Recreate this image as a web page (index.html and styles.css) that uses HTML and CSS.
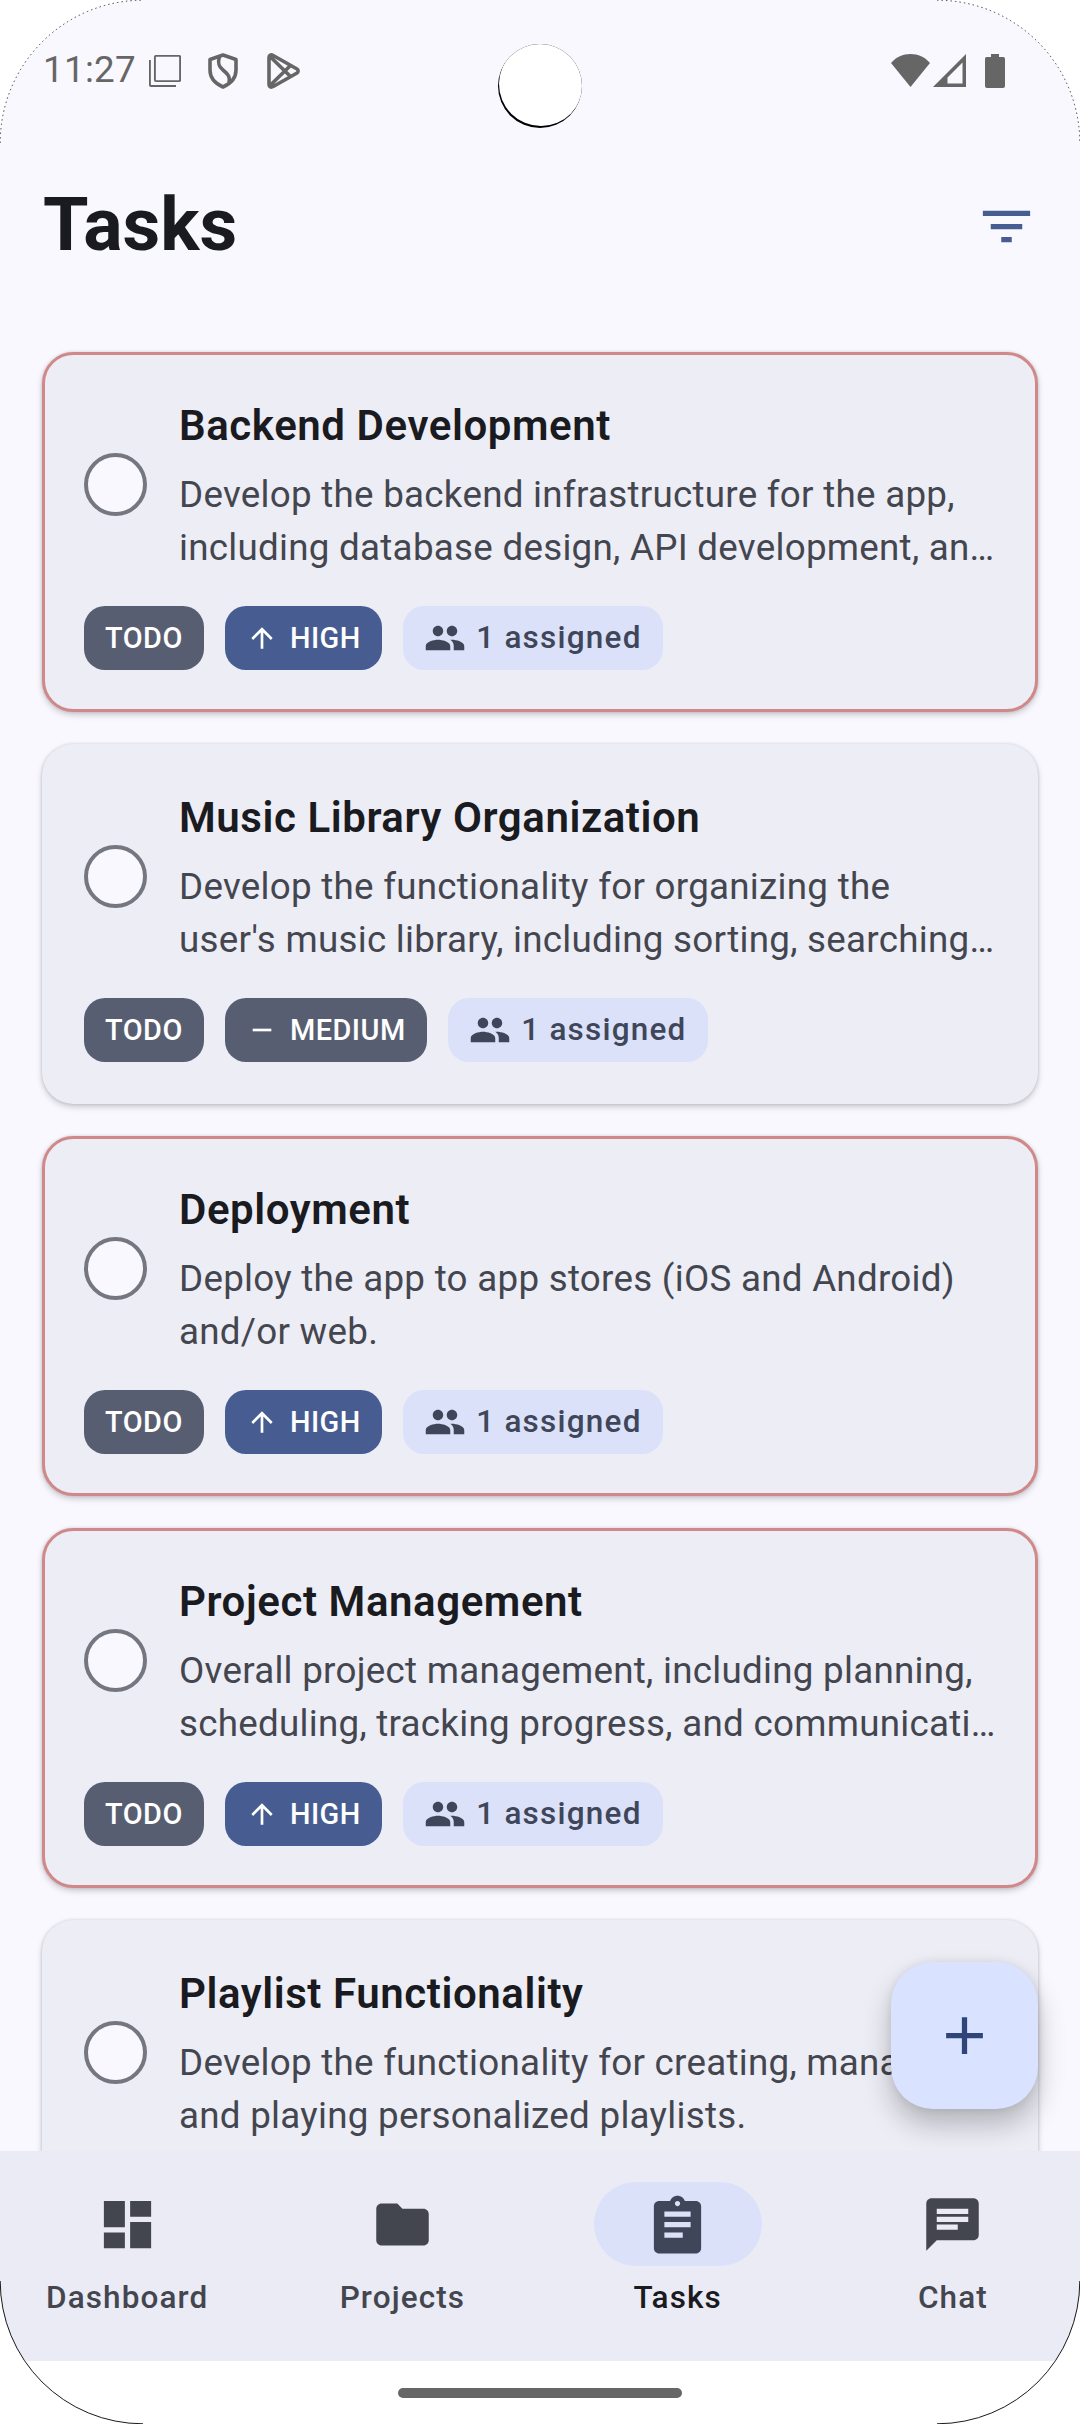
FILE: index.html
```html
<!DOCTYPE html>
<html lang="en">
<head>
<meta charset="utf-8">
<title>Tasks</title>
<link rel="stylesheet" href="styles.css">
</head>
<body>
<svg class="defs" aria-hidden="true">
  <symbol id="i-people" viewBox="0 0 24 24"><path d="M16 11c1.66 0 2.99-1.34 2.99-3S17.66 5 16 5c-1.66 0-3 1.34-3 3s1.34 3 3 3zm-8 0c1.66 0 2.99-1.34 2.99-3S9.66 5 8 5C6.34 5 5 6.34 5 8s1.340 3 3 3zm0 2c-2.330 0-7 1.170-7 3.500V19h14v-2.500c0-2.330-4.670-3.500-7-3.500zm8 0c-.29 0-.62.02-.97.050 1.160.84 1.970 1.970 1.970 3.450V19h6v-2.500c0-2.330-4.670-3.500-7-3.500z"/></symbol>
  <symbol id="i-up" viewBox="0 0 24 24"><path d="M4 12l1.410 1.410L11 7.830V20h2V7.830l5.580 5.590L20 12l-8-8-8 8z"/></symbol>
  <symbol id="i-minus" viewBox="0 0 24 24"><path d="M19 13H5v-2h14v2z"/></symbol>
</svg>
<div class="screen">
  <header class="status">
    <span class="clock">11:27</span>
    <svg class="s-win" viewBox="0 0 32 32"><rect x="5.900" y=".9" width="25.200" height="25.200" rx="1"/><path d="M.9 5V30a1 1 0 0 0 1 1H27"/></svg>
    <svg class="s-shield" viewBox="0 0 30 36"><path d="M15 2L28 6.500V17c0 8-5 13.500-13 17C7 30.500 2 25 2 17V6.500Z"/><path d="M11.500 3.500C9.500 10 10.500 13.500 15 17c5 4 7.500 7 6 13"/></svg>
    <svg class="s-play" viewBox="0 0 33 36"><path d="M2 4.500C2 2 4 1.300 6.200 2.500L30 16c1.500 1 1.500 3 0 4L6.200 33.500C4 34.700 2 34 2 31.500ZM3 3.500L23.500 23.500M3 32.500L23.500 12.500"/></svg>
    <span class="camera"></span>
    <svg class="s-wifi" viewBox="0 0 39 33"><path d="M19.500 33L0 9C5 3 12 0 19.500 0S34 3 39 9Z"/></svg>
    <svg class="s-signal" viewBox="0 0 33 33"><path fill-rule="evenodd" d="M33 0V33H0ZM29.500 8.500L14.500 23.500V29.500H29.500Z"/></svg>
    <svg class="s-battery" viewBox="0 0 20 34"><path d="M6 0H14V3H18.500Q20 3 20 5V32Q20 34 18 34H2Q0 34 0 32V5Q0 3 1.500 3H6Z"/></svg>
  </header>
  <div class="topbar">
    <h1>Tasks</h1>
    <svg class="filter" viewBox="0 0 24 24"><path d="M10 18h4v-2h-4v2zM3 6v2h18V6H3zm3 7h12v-2H6v2z"/></svg>
  </div>
  <main class="list">
    <article class="card high">
      <div class="row"><span class="check"></span><div class="copy"><h2>Backend Development</h2><p>Develop the backend infrastructure for the app,<br>including database design, API development, an…</p></div></div>
      <div class="chips"><span class="chip">TODO</span><span class="chip blue"><svg><use href="#i-up"/></svg>HIGH</span><span class="chip people"><svg><use href="#i-people"/></svg>1 assigned</span></div>
    </article>
    <article class="card">
      <div class="row"><span class="check"></span><div class="copy"><h2>Music Library Organization</h2><p>Develop the functionality for organizing the<br>user's music library, including sorting, searching…</p></div></div>
      <div class="chips"><span class="chip">TODO</span><span class="chip"><svg><use href="#i-minus"/></svg>MEDIUM</span><span class="chip people"><svg><use href="#i-people"/></svg>1 assigned</span></div>
    </article>
    <article class="card high">
      <div class="row"><span class="check"></span><div class="copy"><h2>Deployment</h2><p>Deploy the app to app stores (iOS and Android)<br>and/or web.</p></div></div>
      <div class="chips"><span class="chip">TODO</span><span class="chip blue"><svg><use href="#i-up"/></svg>HIGH</span><span class="chip people"><svg><use href="#i-people"/></svg>1 assigned</span></div>
    </article>
    <article class="card high">
      <div class="row"><span class="check"></span><div class="copy"><h2>Project Management</h2><p>Overall project management, including planning,<br>scheduling, tracking progress, and communicati…</p></div></div>
      <div class="chips"><span class="chip">TODO</span><span class="chip blue"><svg><use href="#i-up"/></svg>HIGH</span><span class="chip people"><svg><use href="#i-people"/></svg>1 assigned</span></div>
    </article>
    <article class="card">
      <div class="row"><span class="check"></span><div class="copy"><h2>Playlist Functionality</h2><p>Develop the functionality for creating, managing,<br>and playing personalized playlists.</p></div></div>
    </article>
    <button class="fab" aria-label="Add task"><svg viewBox="0 0 24 24"><path d="M19 13h-6v6h-2v-6H5v-2h6V5h2v6h6v2z"/></svg></button>
  </main>
  <nav class="nav">
    <a class="item"><span class="pill"><svg viewBox="0 0 24 24"><path d="M3 13h8V3H3v10zm0 8h8v-6H3v6zm10 0h8V11h-8v10zm0-18v6h8V3h-8z"/></svg></span>Dashboard</a>
    <a class="item"><span class="pill"><svg viewBox="0 0 24 24"><path d="M10 4H4c-1.100 0-1.990.9-1.990 2L2 18c0 1.100.9 2 2 2h16c1.100 0 2-.9 2-2V8c0-1.100-.9-2-2-2h-8l-2-2z"/></svg></span>Projects</a>
    <a class="item active"><span class="pill"><svg viewBox="0 0 24 24"><path d="M19 3h-4.180C14.400 1.840 13.300 1 12 1c-1.300 0-2.400.84-2.820 2H5c-1.100 0-2 .9-2 2v16c0 1.100.9 2 2 2h14c1.100 0 2-.9 2-2V5c0-1.100-.9-2-2-2zm-7 0c.55 0 1 .45 1 1s-.45 1-1 1-1-.45-1-1 .45-1 1-1zm2 14H7v-2h7v2zm3-4H7v-2h10v2zm0-4H7V7h10v2z"/></svg></span>Tasks</a>
    <a class="item"><span class="pill"><svg viewBox="0 0 24 24"><path d="M20 2H4c-1.100 0-1.990.9-1.990 2L2 22l4-4h14c1.100 0 2-.9 2-2V4c0-1.100-.9-2-2-2zM6 9h12v2H6V9zm8 5H6v-2h8v2zm4-6H6V6h12v2z"/></svg></span>Chat</a>
  </nav>
  <footer class="gesture"><span></span></footer>
</div>
<svg class="bezel" viewBox="0 0 1080 2424" aria-hidden="true">
  <path class="thin" d="M.2 143A142.800 142.800 0 0 1 143 .2M937 .2A142.800 142.800 0 0 1 1079.800 143"/>
  <path d="M.2 2281A142.800 142.800 0 0 0 143 2423.800M937 2423.800A142.800 142.800 0 0 0 1079.800 2281"/>
</svg>
</body>
</html>
```
FILE: styles.css
```css
* { box-sizing: border-box; margin: 0; padding: 0; }
body { width: 1080px; height: 2424px; overflow: hidden; background: #fff; font-family: Roboto, "Noto Sans", sans-serif; position: relative; }
svg { display: block; flex: none; fill: currentColor; }
.defs { position: absolute; width: 0; height: 0; }
.screen { width: 1080px; height: 2424px; display: flex; flex-direction: column; background: #f9f8ff; border-radius: 143px; overflow: hidden; }

.status { height: 142px; flex: none; display: flex; align-items: flex-start; padding: 53px 75px 0 43px; color: #666; position: relative; }
.clock { width: 106px; font-size: 36.75px; line-height: 36px; letter-spacing: .3px; white-space: nowrap; margin-top: -1px; }
.s-win, .s-shield, .s-play { fill: none; stroke: currentColor; }
.s-win { width: 32px; height: 32px; stroke-width: 1.9; margin-top: 2px; }
.s-shield { width: 30px; height: 36px; stroke-width: 3.6; stroke-linejoin: round; margin-left: 27px; }
.s-play { width: 33px; height: 36px; stroke-width: 3.6; margin-left: 29px; }
.s-wifi { width: 39px; height: 33px; margin: 1px 0 0 auto; }
.s-signal { width: 33px; height: 33px; margin: 1px 0 0 3px; }
.s-battery { width: 20px; height: 34px; margin: 1px 0 0 19px; }
.camera { position: absolute; left: 498px; top: 44px; width: 84px; height: 84px; border-radius: 50%; background: #000; overflow: hidden; }
.camera::after { content: ""; position: absolute; left: 1.2px; top: -2.5px; width: 83.5px; height: 84px; border-radius: 50%; background: #fff; }

.topbar { height: 168px; flex: none; display: flex; justify-content: space-between; align-items: center; padding: 0 42px 0 43px; color: #1a1b20; }
.topbar h1 { font-size: 73.5px; line-height: 94px; font-weight: 700; margin-bottom: 3px; }
.filter { width: 63px; height: 63px; color: #475d92; }

.list { flex: 1; min-height: 0; padding: 42px 42px 0; display: flex; flex-direction: column; gap: 32px; overflow: hidden; position: relative; }
.card { flex: none; height: 360px; padding: 42px; border-radius: 31.5px; background: #ededf6; box-shadow: 0 0 3px rgba(0,0,0,.14), 0 3px 6px rgba(0,0,0,.19); display: flex; flex-direction: column; justify-content: space-between; }
.card.high { border: 3px solid #d08889; padding: 39px; }
.row { display: flex; align-items: center; gap: 32px; height: 180px; }
.check { flex: none; width: 63px; height: 63px; border: 4px solid #757780; border-radius: 50%; background: #f9f8ff; }
.copy { height: 180px; white-space: nowrap; }
h2 { font-size: 42px; line-height: 63px; font-weight: 600; letter-spacing: .57px; color: #1a1b20; margin-bottom: 11px; }
p { font-size: 36.75px; line-height: 53px; letter-spacing: .27px; color: #44464f; }
.chips { display: flex; gap: 21px; height: 64px; }
.chip { display: flex; align-items: center; gap: 12px; padding: 0 21px; border-radius: 21px; background: #585e71; color: #fff; font-size: 28.9px; font-weight: 500; letter-spacing: .5px; white-space: nowrap; }
.chip svg { width: 32px; height: 32px; }
.chip.blue { background: #475d92; }
.chip.people { background: #dce1fa; color: #404659; font-size: 31.5px; gap: 10.5px; letter-spacing: 1.22px; line-height: 36px; padding-bottom: 1px; }
.chip.people svg { width: 42px; height: 42px; }

.fab { position: absolute; right: 42px; bottom: 42px; width: 147px; height: 147px; border: 0; border-radius: 42px; background: #d9e2ff; color: #2f4578; display: flex; align-items: center; justify-content: center; box-shadow: 0 0 10px rgba(0,0,0,.08), 0 16px 28px rgba(0,0,0,.24); }
.fab svg { width: 63px; height: 63px; }

.nav { height: 210px; flex: none; display: flex; gap: 21px; padding-top: 31px; background: #ebebf5; }
.item { flex: 1 1 0; display: flex; flex-direction: column; align-items: center; gap: 11px; font-size: 31.5px; line-height: 42px; font-weight: 500; letter-spacing: 1.1px; color: #44464f; }
.pill { width: 168px; height: 84px; border-radius: 42px; display: flex; align-items: center; justify-content: center; }
.pill svg { width: 63px; height: 63px; }
.active { color: #1a1b20; }
.active .pill { background: #dce1fa; color: #404659; }
.gesture { height: 63px; flex: none; background: #fff; display: flex; align-items: center; justify-content: center; }
.gesture span { width: 284px; height: 10px; border-radius: 5px; background: #666; }

.bezel { position: absolute; left: 0; top: 0; width: 1080px; height: 2424px; pointer-events: none; fill: none; stroke: #000; stroke-width: .9; }
.thin { stroke-width: .7; stroke-dasharray: 1.5 3; }
```
